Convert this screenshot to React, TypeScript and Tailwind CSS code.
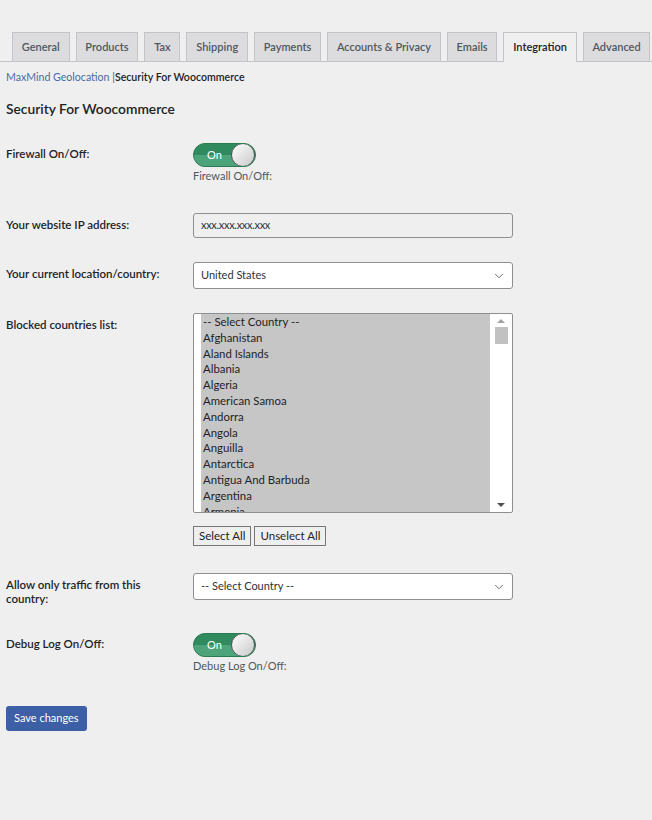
import { ChevronDown } from 'lucide-react';

const tabs = ['General', 'Products', 'Tax', 'Shipping', 'Payments', 'Accounts & Privacy', 'Emails', 'Integration', 'Advanced'];

const countries = [
  '-- Select Country --',
  'Afghanistan',
  'Aland Islands',
  'Albania',
  'Algeria',
  'American Samoa',
  'Andorra',
  'Angola',
  'Anguilla',
  'Antarctica',
  'Antigua And Barbuda',
  'Argentina',
  'Armenia',
];

const Toggle = ({ caption }: { caption: string }) => (
  <div className="flex flex-col items-start">
    <div className="relative w-[63px] h-[24px] rounded-full overflow-hidden bg-[#2f8a5d] border border-[#2a7a52]">
      <div className="absolute left-0 right-0 bottom-0 h-[11px] bg-[#4da47a]" />
      <span className="absolute left-[13px] top-[3px] text-[11px] text-white leading-[16px]">On</span>
      <div className="absolute right-0 top-[-1px] w-[24px] h-[24px] rounded-full border border-[#555] bg-gradient-to-br from-white to-[#c9c9c9]" />
    </div>
    <span className="text-[11px] text-[#50575e] leading-[16px] mt-[1px]">{caption}</span>
  </div>
);

const SelectBox = ({ value }: { value: string }) => (
  <div className="w-[320px] h-[27px] bg-white border border-[#8c8f94] rounded-[3px] flex items-center justify-between pl-[7px] pr-[6px]">
    <span className="text-[11px] text-[#2c3338]">{value}</span>
    <ChevronDown size={14} strokeWidth={1.5} className="text-[#50575e]" />
  </div>
);

export default function App() {
  return (
    <div className="min-h-[820px] w-[652px] bg-[#efefef] text-[#1d2327]" style={{ fontFamily: 'Lato, "Open Sans", sans-serif' }}>
      <nav className="pt-[32px] pl-[12px] flex items-end gap-[6px] border-b border-[#c3c4c7]">
        {tabs.map((t) => (
          <div
            key={t}
            className={`h-[29px] px-[8.8px] flex items-center whitespace-nowrap border border-[#c3c4c7] border-b-0 text-[11px] font-semibold ${t === 'Integration' ? 'bg-[#efefef] text-[#1d2327] -mb-px h-[30px]' : 'bg-[#dcdcde] text-[#50575e]'}`}
          >
            {t}
          </div>
        ))}
      </nav>

      <div className="px-[6px]">
        <p className="mt-[7px] text-[10.6px] leading-[16px]">
          <span className="text-[#4b6aa8]">MaxMind Geolocation</span>
          <span className="text-[#50575e]"> |</span>
          <span className="font-semibold">Security For Woocommerce</span>
        </p>

        <h2 className="mt-[14px] text-[13.8px] font-semibold leading-[20px]">Security For Woocommerce</h2>

        <div className="mt-[24px] flex flex-col">
          <div className="flex">
            <div className="w-[187px] text-[11.5px] font-semibold pt-[2px]">Firewall On/Off:</div>
            <Toggle caption="Firewall On/Off:" />
          </div>

          <div className="flex mt-[29px]">
            <div className="w-[187px] text-[11.5px] font-semibold pt-[3px]">Your website IP address:</div>
            <div className="w-[320px] h-[25px] bg-[#efefef] border border-[#8c8f94] rounded-[3px] flex items-center px-[7px]">
              <span className="text-[11px] text-[#2c3338] tracking-[-0.3px]">xxx.xxx.xxx.xxx</span>
            </div>
          </div>

          <div className="flex mt-[24px]">
            <div className="w-[187px] text-[11.5px] font-semibold pt-[3px]">Your current location/country:</div>
            <SelectBox value="United States" />
          </div>

          <div className="flex mt-[24px]">
            <div className="w-[187px] text-[11.5px] font-semibold pt-[3px]">Blocked countries list:</div>
            <div className="flex flex-col">
              <div className="w-[320px] h-[200px] bg-white border border-[#8c8f94] rounded-[2px] flex overflow-hidden">
                <div className="flex-1 pl-[7px]">
                  <ul className="bg-[#c6c6c6] h-full">
                    {countries.map((c) => (
                      <li key={c} className="text-[11.4px] leading-[15.8px] pl-[2px] text-[#1d2327]">{c}</li>
                    ))}
                  </ul>
                </div>
                <div className="w-[22px] flex flex-col items-center pt-[5px] pb-[5px]">
                  <div className="w-0 h-0 border-l-[4px] border-r-[4px] border-b-[4px] border-l-transparent border-r-transparent border-b-[#a3a3a3]" />
                  <div className="mt-[4px] w-[13px] h-[17px] bg-[#c1c1c1]" />
                  <div className="flex-1" />
                  <div className="w-0 h-0 border-l-[4px] border-r-[4px] border-t-[4px] border-l-transparent border-r-transparent border-t-[#505050]" />
                </div>
              </div>
              <div className="flex gap-[3px] mt-[13px]">
                <button className="h-[20px] px-[5px] border border-[#767676] bg-[#efefef] text-[11.5px] leading-[16px]">Select All</button>
                <button className="h-[20px] px-[5px] border border-[#767676] bg-[#efefef] text-[11.5px] leading-[16px]">Unselect All</button>
              </div>
            </div>
          </div>

          <div className="flex mt-[27px]">
            <div className="w-[187px] text-[11.5px] font-semibold pt-[5px] pr-[30px] leading-[14px]">Allow only traffic from this country:</div>
            <SelectBox value="-- Select Country --" />
          </div>

          <div className="flex mt-[27px]">
            <div className="w-[187px] text-[11.5px] font-semibold pt-[2px]">Debug Log On/Off:</div>
            <Toggle caption="Debug Log On/Off:" />
          </div>
        </div>

        <button className="mt-[32px] h-[25px] px-[8px] rounded-[3px] bg-[#3c5fa6] text-white text-[11px]">Save changes</button>
      </div>
    </div>
  );
}
